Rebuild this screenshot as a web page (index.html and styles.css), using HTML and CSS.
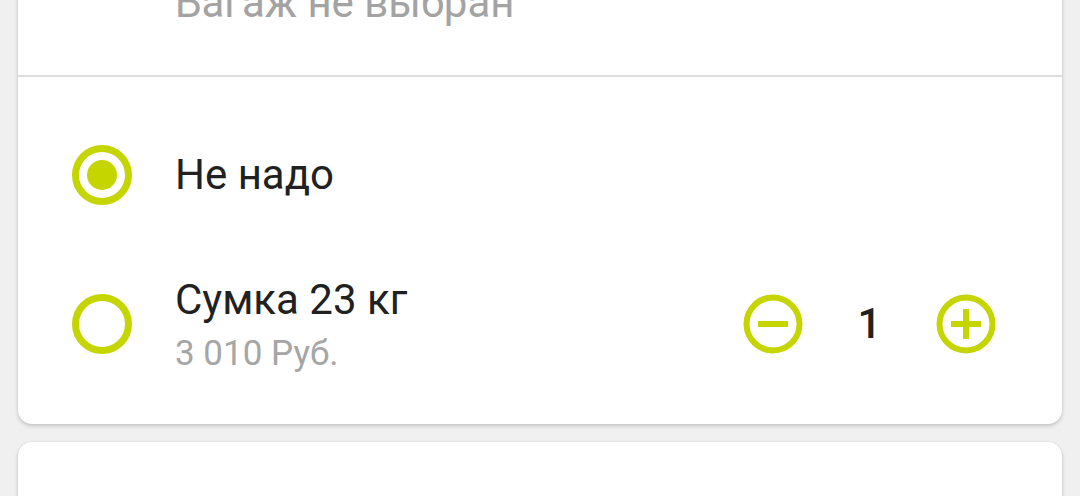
FILE: index.html
```html
<!DOCTYPE html>
<html lang="ru">
<head>
<meta charset="utf-8">
<link rel="stylesheet" href="styles.css">
</head>
<body>
<div class="card card-main">
  <div class="summary">
    <div class="summary-text">Багаж не выбран</div>
  </div>
  <div class="options">
    <div class="option option-simple">
      <span class="radio radio-on"><span class="dot"></span></span>
      <div class="label">Не надо</div>
    </div>
    <div class="option option-bag">
      <span class="radio"></span>
      <div class="info">
        <div class="label">Сумка 23 кг</div>
        <div class="price">3 010 Руб.</div>
      </div>
      <div class="stepper">
        <svg class="step-btn" viewBox="0 0 60 60" width="60" height="60"><circle cx="30" cy="30" r="26.5" fill="none" stroke="#c5d500" stroke-width="6"/><line x1="15" y1="30" x2="45" y2="30" stroke="#c5d500" stroke-width="6"/></svg>
        <span class="count">1</span>
        <svg class="step-btn" viewBox="0 0 60 60" width="60" height="60"><circle cx="30" cy="30" r="26.5" fill="none" stroke="#c5d500" stroke-width="6"/><line x1="15" y1="30" x2="45" y2="30" stroke="#c5d500" stroke-width="6"/><line x1="30" y1="15" x2="30" y2="45" stroke="#c5d500" stroke-width="6"/></svg>
      </div>
    </div>
  </div>
</div>
<div class="card card-next"></div>
</body>
</html>
```
FILE: styles.css
```css
html, body {
  margin: 0;
  padding: 0;
}
body {
  background: #f0f0f0;
  font-family: Roboto, "Noto Sans", sans-serif;
  color: #212121;
  height: 496px;
  overflow: hidden;
}
.card {
  background: #fff;
  margin: 0 18px;
  border-radius: 14px;
  box-shadow: 0 2px 4px rgba(0, 0, 0, 0.18), 0 0 2px rgba(0, 0, 0, 0.08);
}
.card-main {
  margin-top: -37px;
  border-top-left-radius: 0;
  border-top-right-radius: 0;
}
.summary {
  height: 114px;
  border-bottom: 2px solid #dddddd;
  box-sizing: border-box;
  padding-left: 157px;
  padding-top: 15px;
}
.summary-text {
  font-size: 42px;
  line-height: 50px;
  color: #a3a3a3;
}
.options {
  padding: 68px 66px 0 54px;
  height: 347px;
  box-sizing: border-box;
}
.option {
  display: flex;
  align-items: center;
}
.option-simple {
  height: 60px;
}
.option-bag {
  margin-top: 89px;
  height: 60px;
}
.radio {
  flex: none;
  width: 60px;
  height: 60px;
  box-sizing: border-box;
  border: 7px solid #c5d500;
  border-radius: 50%;
  display: flex;
  align-items: center;
  justify-content: center;
  margin-right: 43px;
}
.dot {
  width: 30px;
  height: 30px;
  border-radius: 50%;
  background: #c5d500;
}
.label {
  font-size: 42px;
  line-height: 50px;
}
.info {
  flex: 1;
}
.price {
  font-size: 35px;
  line-height: 48px;
  margin-top: 5px;
  margin-bottom: -5px;
  color: #a6a6a6;
}
.stepper {
  display: flex;
  align-items: center;
}
.step-btn {
  display: block;
}
.count {
  width: 133px;
  text-align: center;
  font-size: 42px;
  font-weight: 500;
  line-height: 50px;
}
.card-next {
  margin-top: 18px;
  height: 100px;
}
```
